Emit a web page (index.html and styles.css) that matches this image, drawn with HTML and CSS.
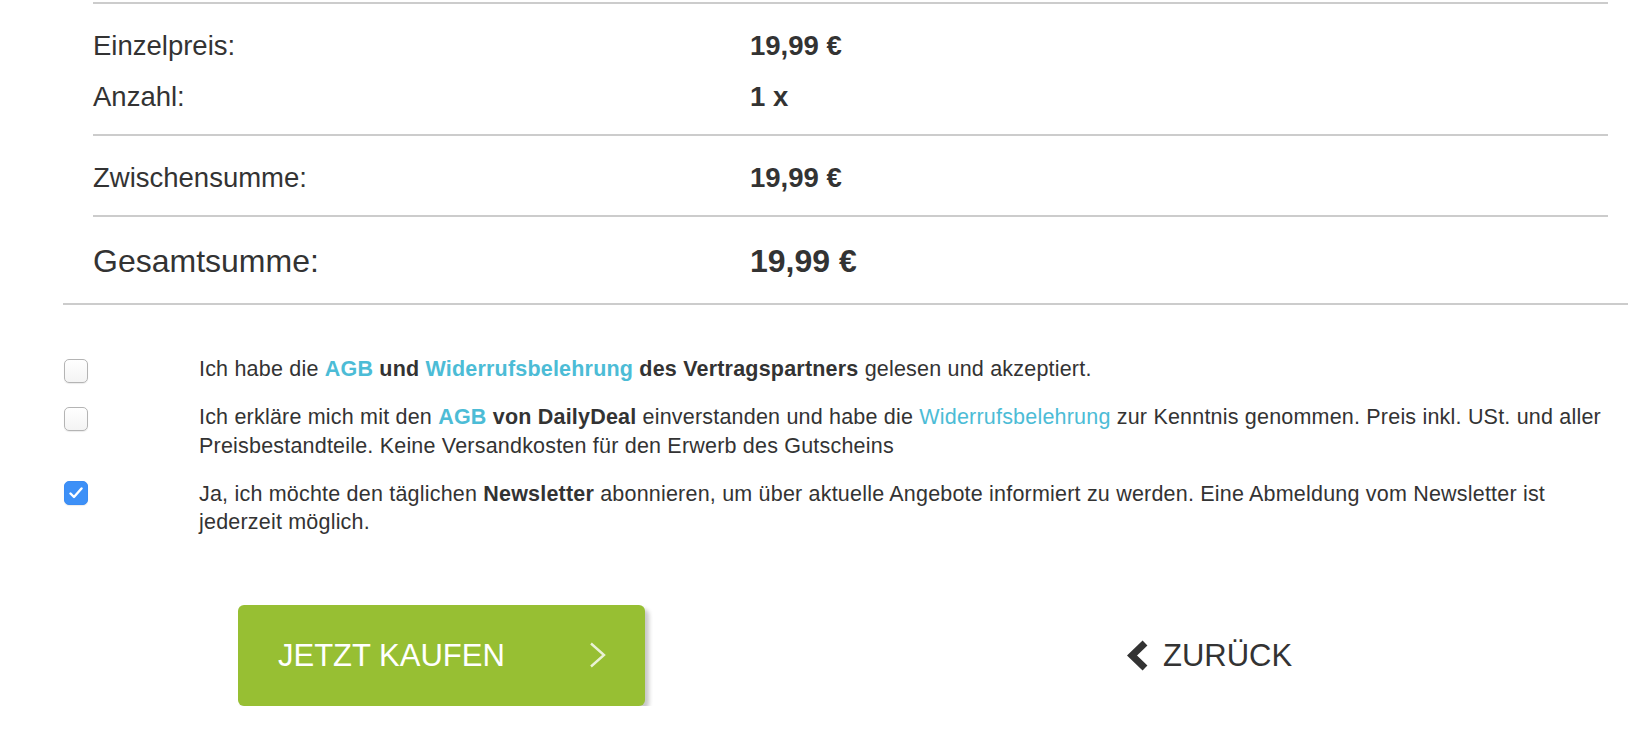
FILE: index.html
```html
<!DOCTYPE html>
<html lang="de">
<head>
  <meta charset="UTF-8">
  <title>Warenkorb - Bestellung</title>
  <meta name="viewport" content="width=device-width, initial-scale=1.0">
  <link rel="stylesheet" href="styles.css">
</head>
<body>
  <div class="summary">
    <div class="group">
      <div class="row">
        <span class="label">Einzelpreis:</span>
        <span class="value">19,99 €</span>
      </div>
      <div class="row">
        <span class="label">Anzahl:</span>
        <span class="value">1 x</span>
      </div>
    </div>
    <div class="group">
      <div class="row">
        <span class="label">Zwischensumme:</span>
        <span class="value">19,99 €</span>
      </div>
    </div>
    <div class="group total">
      <div class="row">
        <span class="label">Gesamtsumme:</span>
        <span class="value">19,99 €</span>
      </div>
    </div>
  </div>
  <div class="divider"></div>

  <form class="agree">
    <label class="agree-row">
      <span class="box"></span>
      <span class="agree-text">Ich habe die <a href="#" class="strong">AGB</a> <b>und</b> <a href="#" class="strong">Widerrufsbelehrung</a> <b>des Vertragspartners</b> gelesen und akzeptiert.</span>
    </label>
    <label class="agree-row">
      <span class="box"></span>
      <span class="agree-text">Ich erkläre mich mit den <a href="#" class="strong">AGB</a> <b>von DailyDeal</b> einverstanden und habe die <a href="#">Widerrufsbelehrung</a> zur Kenntnis genommen. Preis inkl. USt. und aller Preisbestandteile. Keine Versandkosten für den Erwerb des Gutscheins</span>
    </label>
    <label class="agree-row">
      <span class="box checked">
        <svg width="14" height="12" viewBox="0 0 14 12"><polyline points="1.5,6.5 5,10 12.5,1.5" fill="none" stroke="#fff" stroke-width="2.4" stroke-linecap="round" stroke-linejoin="round"/></svg>
      </span>
      <span class="agree-text">Ja, ich möchte den täglichen <b>Newsletter</b> abonnieren, um über aktuelle Angebote informiert zu werden. Eine Abmeldung vom Newsletter ist jederzeit möglich.</span>
    </label>
  </form>

  <div class="actions">
    <a href="#" class="buy-btn">
      <span>JETZT KAUFEN</span>
      <svg class="buy-arrow" width="18" height="26" viewBox="0 0 18 26"><polyline points="2,1.5 15,13 2,24.5" fill="none" stroke="rgba(255,255,255,0.8)" stroke-width="2.4"/></svg>
    </a>
    <a href="#" class="back">
      <svg width="22" height="31" viewBox="0 0 22 31"><polyline points="18,3 5,15.5 18,28" fill="none" stroke="#333" stroke-width="7"/></svg>
      <span>ZURÜCK</span>
    </a>
  </div>
</body>
</html>
```

FILE: styles.css
```css
* {
  box-sizing: border-box;
}

body {
  margin: 0;
  font-family: 'Liberation Sans', Helvetica, Arial, sans-serif;
  color: #333;
  background: #fff;
}

a {
  text-decoration: none;
}

/* Preisübersicht */
.summary {
  margin: 2px 20px 0 93px;
  border-top: 2px solid #ccc;
}

.group {
  padding: 16px 0 12px;
  border-bottom: 2px solid #ccc;
}

.row {
  display: grid;
  grid-template-columns: 657px 1fr;
  font-size: 27.5px;
  line-height: 51px;
}

.value {
  font-weight: bold;
}

.group.total {
  padding: 19px 0 0;
  border-bottom: none;
}

.group.total .row {
  font-size: 32px;
}

.divider {
  margin: 16px 0 0 63px;
  border-top: 2px solid #ccc;
}

/* Checkboxen */
.agree {
  margin-top: 50px;
  padding: 0 16px 0 64px;
}

.agree-row {
  display: flex;
  margin-bottom: 20px;
  font-size: 21.5px;
  line-height: 28.35px;
  letter-spacing: 0.2px;
}

.agree-row:last-child {
  margin-bottom: 0;
}

.box {
  flex: none;
  width: 24px;
  height: 24px;
  margin-top: 4px;
  margin-right: 111px;
  border: 1px solid #b4b4b4;
  border-radius: 5px;
  background: linear-gradient(#fff, #f4f4f4);
  box-shadow: 0 1px 1px rgba(0,0,0,0.08);
  display: flex;
  align-items: center;
  justify-content: center;
}

.box.checked {
  margin-top: 1px;
  border-color: #3b8cf3;
  background: #3d90f7;
}

.agree-text a {
  color: #4cbcd6;
}

.agree-text a.strong,
.agree-text b {
  font-weight: bold;
}

/* Buttons */
.actions {
  display: flex;
  align-items: center;
  margin-top: 68px;
  padding-left: 238px;
}

.buy-btn {
  display: flex;
  align-items: center;
  width: 407px;
  height: 101px;
  padding: 0 38px 0 40px;
  background-color: #97bf33;
  border-radius: 6px;
  box-shadow: 4px 4px 4px rgba(0,0,0,0.22);
  color: #fff;
  font-size: 31px;
  line-height: 1;
}

.buy-arrow {
  margin-left: auto;
}

.back {
  display: flex;
  align-items: center;
  gap: 14px;
  margin-left: 482px;
  color: #333;
  font-size: 31px;
  line-height: 1;
}
```
